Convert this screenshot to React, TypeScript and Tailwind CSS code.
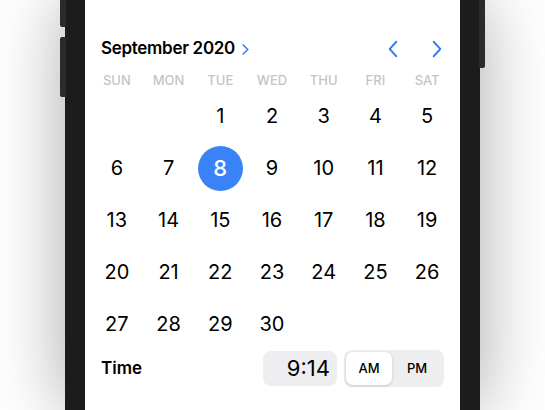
import React from 'react';

const weekdays = ['SUN', 'MON', 'TUE', 'WED', 'THU', 'FRI', 'SAT'];

// Sept 2020 starts on a Tuesday
const cells: (number | null)[] = [null, null, ...Array.from({ length: 30 }, (_, i) => i + 1)];

function Chevron({ dir, className, width = 2.2 }: { dir: 'left' | 'right'; className?: string; width?: number }) {
  return (
    <svg viewBox="0 0 12 20" className={className} fill="none" stroke="#2f7cf6" strokeWidth={width} strokeLinecap="round" strokeLinejoin="round" preserveAspectRatio="none">
      {dir === 'left' ? <path d="M10 2 L2 10 L10 18" /> : <path d="M2 2 L10 10 L2 18" />}
    </svg>
  );
}

export default function App() {
  const selected = 8;

  return (
    <div
      className="w-[545px] h-[410px] overflow-hidden bg-white flex"
      style={{ fontFamily: 'Inter, "Liberation Sans", sans-serif' }}
    >
      <div className="relative ml-[65px] w-[415px] h-[410px] bg-[#1c1c1c] px-[20px] shadow-[0_0_70px_rgba(0,0,0,0.35)]">
        {/* side buttons */}
        <div className="absolute left-[-5px] top-[-6px] w-[6px] h-[33px] rounded-l-[2px] bg-[#2b2b2b]" />
        <div className="absolute left-[-5px] top-[37px] w-[6px] h-[60px] rounded-l-[2px] bg-[#2b2b2b]" />
        <div className="absolute right-[-5px] top-[-6px] w-[6px] h-[74px] rounded-r-[2px] bg-[#2b2b2b]" />

        <div className="w-[375px] h-full bg-white flex flex-col">
          {/* month header */}
          <div className="h-[71px] pt-[27px] pl-4 pr-[18px] flex items-center justify-between">
            <div className="flex items-center gap-[7px]">
              <span className="text-[17px] font-semibold text-black tracking-[-0.3px]">September 2020</span>
              <Chevron dir="right" width={2.6} className="w-[7px] h-[11px] mt-[1px]" />
            </div>
            <div className="flex items-center gap-[34px]">
              <Chevron dir="left" className="w-[10px] h-[18px]" />
              <Chevron dir="right" className="w-[10px] h-[18px]" />
            </div>
          </div>

          {/* weekday labels */}
          <div className="grid grid-cols-7 pl-[6px] pr-[7px] h-[19px] items-center">
            {weekdays.map((d) => (
              <div key={d} className="text-center text-[13px] font-medium text-[#c4c4c7]">
                {d}
              </div>
            ))}
          </div>

          {/* days */}
          <div className="grid grid-cols-7 pl-[6px] pr-[7px]">
            {cells.map((n, i) => (
              <div key={i} className="h-[52px] flex items-center justify-center">
                {n === selected ? (
                  <div className="w-[45px] h-[45px] rounded-full bg-[#3a82f7] flex items-center justify-center text-white text-[22px] font-medium">
                    {n}
                  </div>
                ) : (
                  <span className="text-[20px] text-black">{n ?? ''}</span>
                )}
              </div>
            ))}
          </div>

          {/* time row */}
          <div className="flex items-center justify-between pl-4 pr-4 h-[37px]">
            <span className="text-[17px] font-semibold text-black">Time</span>
            <div className="flex items-center gap-[7px]">
              <div className="w-[74px] h-[35px] rounded-[8px] bg-[#eeeef0] flex items-center justify-end pr-[7px] text-[22px] text-black">
                9:14
              </div>
              <div className="w-[100px] h-[37px] rounded-[8px] bg-[#eeeef0] p-[2px] flex">
                <div className="w-[46px] h-full rounded-[7px] bg-white shadow-[0_1px_3px_rgba(0,0,0,0.18)] flex items-center justify-center text-[13px] font-medium text-black">
                  AM
                </div>
                <div className="flex-1 flex items-center justify-center text-[13px] font-medium text-black">
                  PM
                </div>
              </div>
            </div>
          </div>
        </div>
      </div>
    </div>
  );
}
